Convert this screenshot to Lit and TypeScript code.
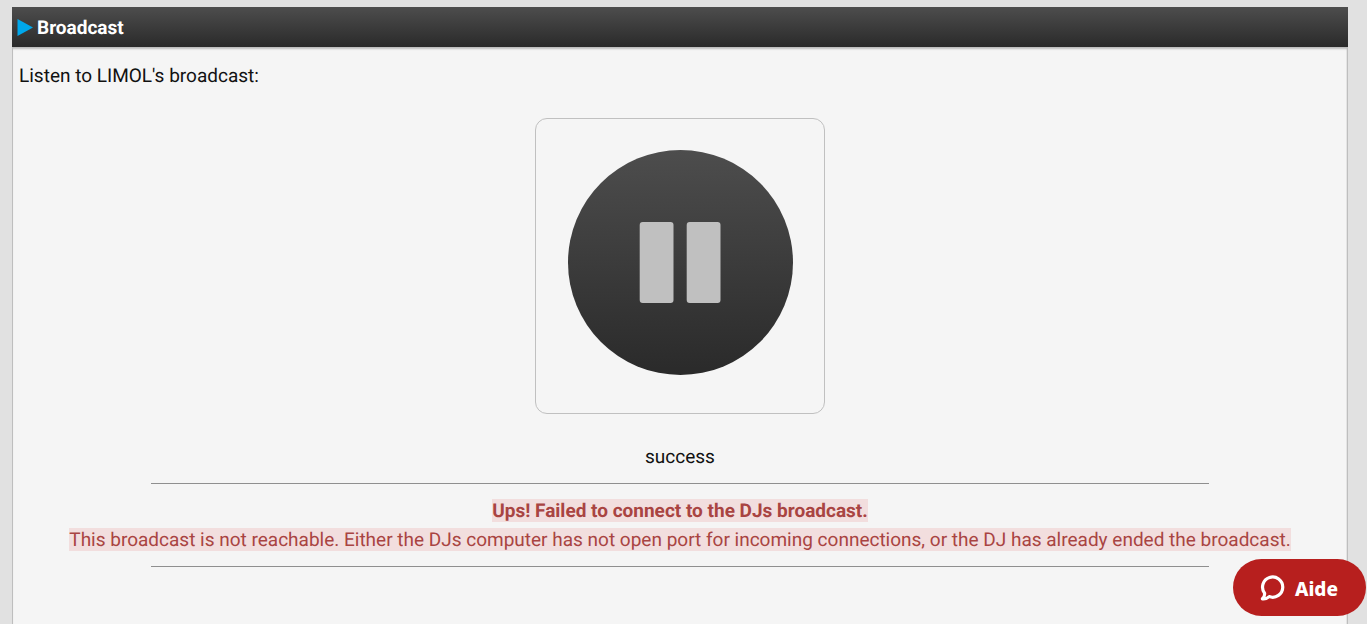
import { LitElement, html, css, svg } from "lit";
import { customElement, property, state } from "lit/decorators.js";

@customElement("play-toggle")
class PlayToggle extends LitElement {
  @property({ type: Boolean }) playing = false;

  static styles = css`
    :host {
      display: block;
    }
    .toggle {
      display: grid;
      place-items: center;
      width: 225px;
      height: 225px;
      padding: 0;
      border: 0;
      border-radius: 50%;
      background: linear-gradient(#4d4d4d, #2a2a2a);
      color: #c0c0c0;
      cursor: pointer;
    }
    .glyph {
      display: block;
      width: 81px;
      height: 81px;
    }
  `;

  render() {
    const bars = svg`<rect x="-0.3" y="0" width="33.8" height="81" rx="3" /><rect x="46.7" y="0" width="33.8" height="81" rx="3" />`;
    const triangle = svg`<path d="M10 0 78 40.5 10 81z" />`;
    return html`
      <button
        class="toggle"
        type="button"
        aria-label=${this.playing ? "Pause" : "Play"}
        @click=${() => this.dispatchEvent(new CustomEvent("toggle"))}
      >
        <svg class="glyph" viewBox="0 0 81 81" fill="currentColor" overflow="visible" aria-hidden="true">
          ${this.playing ? bars : triangle}
        </svg>
      </button>
    `;
  }
}

@customElement("help-button")
class HelpButton extends LitElement {
  static styles = css`
    :host {
      position: fixed;
      right: 1px;
      bottom: 8px;
    }
    .help {
      display: flex;
      align-items: center;
      gap: 10px;
      height: 57px;
      padding: 0 28px 0 27px;
      border: 0;
      border-radius: 29px;
      background: #b71f1e;
      color: #fff;
      font: 800 19px/28px "Noto Sans", sans-serif;
      cursor: pointer;
    }
    .bubble {
      display: block;
      width: 25px;
      height: 26px;
    }
    .label {
      padding-top: 3px;
    }
  `;

  render() {
    return html`
      <button class="help" type="button">
        <svg class="bubble" viewBox="0 0 25 26" fill="none" stroke="#fff" stroke-width="3.2" stroke-linejoin="round" stroke-linecap="round" aria-hidden="true">
          <path d="M4.6 18.2A10.1 10.1 0 1 1 9.2 21.6C7.2 23.4 4.8 24.1 2.4 23.8C4 22.4 4.8 20.4 4.6 18.2Z" />
        </svg>
        <span class="label">Aide</span>
      </button>
    `;
  }
}

@customElement("app-root")
class AppRoot extends LitElement {
  @state() private playing = true;

  static styles = css`
    :host {
      box-sizing: border-box;
      min-height: 100vh;
      padding: 7px 19px 0 12px;
      background: #e1e1e1;
      color: #111;
      font: 400 19px/29px Roboto, sans-serif;
      text-rendering: geometricPrecision;
      display: flex;
      flex-direction: column;
    }
    .title {
      display: flex;
      align-items: center;
      gap: 4px;
      margin: 0;
      height: 40px;
      padding: 0 5px;
      background: linear-gradient(#4d4d4d, #2a2a2a);
      color: #fff;
      font-size: 19px;
      font-weight: 700;
    }
    .marker {
      display: block;
      width: 16px;
      height: 17px;
    }
    .body {
      flex: 1;
      display: flex;
      flex-direction: column;
      align-items: center;
      padding: 13px 6px 0;
      border: 1px solid #bebebe;
      border-bottom: 0;
      background: #f5f5f5;
      box-shadow: inset 0 2px 2px -1px #bebebe, inset -1px 0 #e6e6e6;
    }
    .intro {
      align-self: stretch;
      margin: 0;
    }
    .player {
      margin: 28px 0;
      padding: 31px 31px 38px 32px;
      border: 1px solid #c0c0c0;
      border-radius: 12px;
    }
    .status,
    .error {
      margin: 0;
      text-align: center;
    }
    .rule {
      width: 80%;
      height: 1px;
      margin: 12px 0;
      border: 0;
      background: #8f8f8f;
    }
    .mark {
      background: #f2dede;
      color: #a94442;
    }
  `;

  render() {
    return html`
      <h1 class="title">
        <svg class="marker" viewBox="0 0 16 17" aria-hidden="true"><path d="M.5 0 16 8.5.5 17z" fill="#00a8ec" /></svg>
        Broadcast
      </h1>
      <main class="body">
        <p class="intro">Listen to LIMOL's broadcast:</p>
        <div class="player">
          <play-toggle
            .playing=${this.playing}
            @toggle=${() => (this.playing = !this.playing)}
          ></play-toggle>
        </div>
        <p class="status">success</p>
        <hr class="rule" />
        <p class="error">
          <strong class="mark">Ups! Failed to connect to the DJs broadcast.</strong><br />
          <span class="mark">This broadcast is not reachable. Either the DJs computer has not open port for incoming connections, or the DJ has already ended the broadcast.</span>
        </p>
        <hr class="rule" />
      </main>
      <help-button></help-button>
    `;
  }
}
